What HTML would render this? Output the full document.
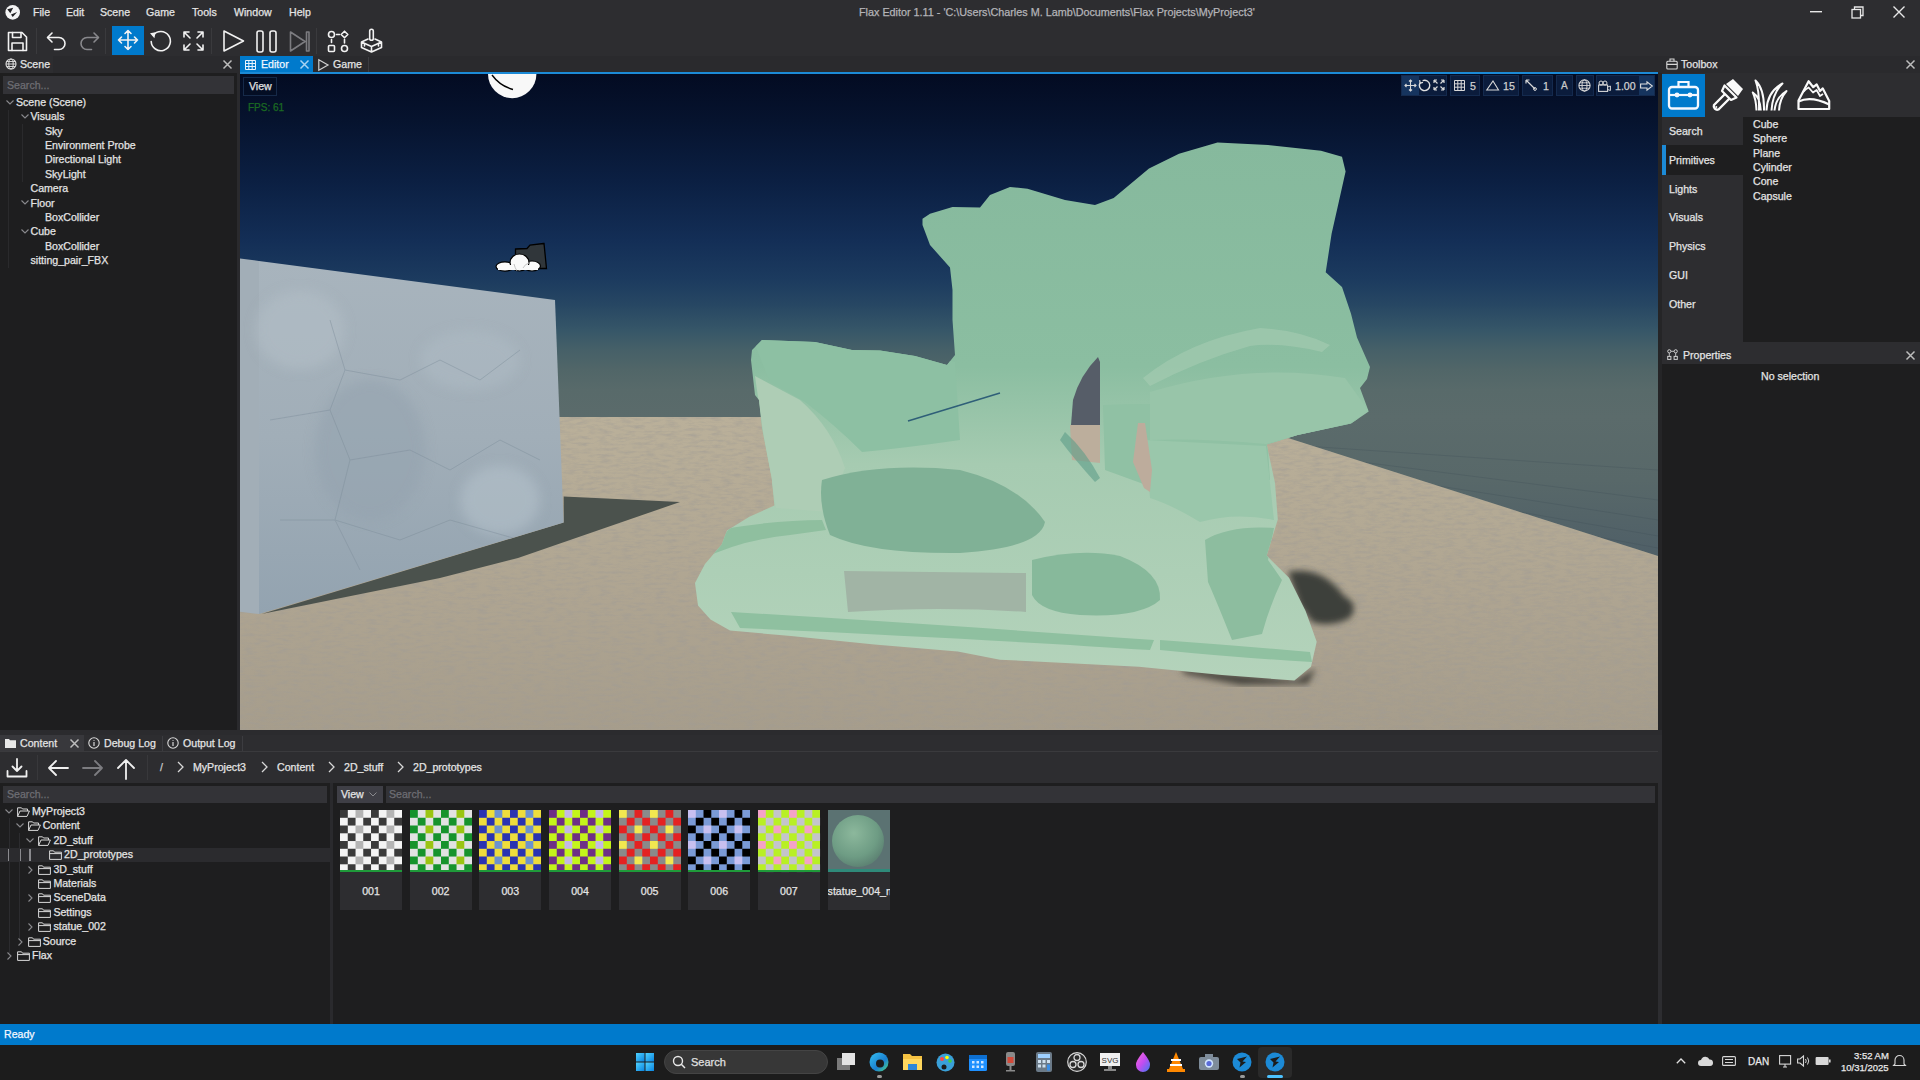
<!DOCTYPE html>
<html><head><meta charset="utf-8">
<style>
*{margin:0;padding:0;box-sizing:border-box}
html,body{width:1920px;height:1080px;overflow:hidden;background:#1c1c1c;font-family:"Liberation Sans",sans-serif;font-size:10.6px;color:#e4e4e4}
.a{position:absolute}
.t{position:absolute;white-space:nowrap;line-height:12px;-webkit-text-stroke:0.25px currentColor}
svg{position:absolute;overflow:visible}
.ic{fill:none;stroke:#f2f2f2;stroke-width:1.6;stroke-linecap:round;stroke-linejoin:round}
</style></head><body>

<!-- ===== top bar ===== -->
<div class="a" style="left:0;top:0;width:1920px;height:56px;background:#2d2d30"></div>
<div class="a" style="left:0;top:56px;width:1920px;height:17px;background:#2a2a2d"></div>
<svg style="left:4px;top:4px" width="18" height="18" viewBox="0 0 18 18"><circle cx="8.7" cy="8.4" r="7.3" fill="#f4f4f4"/><path d="M3.3 5.3 L9.2 3.7 L6.3 9.2 Z M7 10.6 L13.2 7.9 L8.7 12.9 Z" fill="#222225"/></svg>
<div class="t" style="left:33px;top:6px">File</div>
<div class="t" style="left:66px;top:6px">Edit</div>
<div class="t" style="left:100px;top:6px">Scene</div>
<div class="t" style="left:146px;top:6px">Game</div>
<div class="t" style="left:192px;top:6px">Tools</div>
<div class="t" style="left:234px;top:6px">Window</div>
<div class="t" style="left:289px;top:6px">Help</div>
<div class="t" style="left:859px;top:6px;color:#b4b4b8;font-size:10.8px">Flax Editor 1.11 - 'C:\Users\Charles M. Lamb\Documents\Flax Projects\MyProject3'</div>
<!-- window controls -->
<svg style="left:1810px;top:11px" width="12" height="2"><rect width="12" height="1.4" fill="#e8e8e8"/></svg>
<svg style="left:1851px;top:6px" width="13" height="13" viewBox="0 0 13 13"><rect x="1" y="3.5" width="8.5" height="8.5" fill="none" stroke="#e8e8e8" stroke-width="1.3"/><path d="M3.5 3.5 V1 H12 V9.5 H9.5" fill="none" stroke="#e8e8e8" stroke-width="1.3"/></svg>
<svg style="left:1893px;top:6px" width="12" height="12" viewBox="0 0 12 12"><path d="M0.5 0.5 L11.5 11.5 M11.5 0.5 L0.5 11.5" stroke="#e8e8e8" stroke-width="1.4"/></svg>
<!-- toolbar -->
<svg style="left:7px;top:31px" width="21" height="21" viewBox="0 0 21 21"><path class="ic" d="M1.5 1.5 H15 L19.5 6 V19.5 H1.5 Z" stroke-width="1.8"/><path class="ic" d="M5.5 1.5 V6.5 H14 V1.5" stroke-width="1.8"/><path class="ic" d="M5 19.5 V12 H16 V19.5" stroke-width="1.8"/></svg>
<div class="a" style="left:36px;top:28px;width:1px;height:26px;background:#3a3a3d"></div>
<svg style="left:46px;top:30px" width="22" height="22" viewBox="0 0 22 22"><path class="ic" d="M6 3 L1.5 7.5 L6 12" stroke-width="1.8"/><path class="ic" d="M1.8 7.5 H13 A6 6 0 0 1 13 19.5 H8.5" stroke-width="1.8"/></svg>
<svg style="left:78px;top:30px" width="22" height="22" viewBox="0 0 22 22"><path class="ic" d="M16 3 L20.5 7.5 L16 12" style="stroke:#88888c" stroke-width="1.8"/><path class="ic" d="M20.2 7.5 H9 A6 6 0 0 0 9 19.5 H13.5" style="stroke:#88888c" stroke-width="1.8"/></svg>
<div class="a" style="left:105px;top:28px;width:1px;height:26px;background:#3a3a3d"></div>
<div class="a" style="left:112px;top:26px;width:32px;height:29px;background:#007acc"></div>
<svg style="left:116px;top:28px" width="24" height="24" viewBox="0 0 24 24"><path class="ic" d="M12 2.5 V21.5 M2.5 12 H21.5 M9 5.5 L12 2.5 L15 5.5 M9 18.5 L12 21.5 L15 18.5 M5.5 9 L2.5 12 L5.5 15 M18.5 9 L21.5 12 L18.5 15" stroke-width="1.6"/></svg>
<svg style="left:148px;top:29px" width="25" height="25" viewBox="0 0 25 25"><path class="ic" d="M5.2 6.2 A9.6 9.6 0 1 1 3.2 12.5" stroke-width="2"/><path d="M2 4.2 L7.6 3.2 L6.4 9.2 Z" fill="#f2f2f2"/></svg>
<svg style="left:182px;top:30px" width="23" height="22" viewBox="0 0 23 22"><path class="ic" d="M2 2 L8 8 M2 2 H7 M2 2 V7 M21 2 L15 8 M21 2 H16 M21 2 V7 M2 20 L8 14 M2 20 H7 M2 20 V15 M21 20 L15 14 M21 20 H16 M21 20 V15" stroke-width="1.8"/></svg>
<div class="a" style="left:211px;top:28px;width:1px;height:26px;background:#3a3a3d"></div>
<svg style="left:222px;top:29px" width="23" height="24" viewBox="0 0 23 24"><path class="ic" d="M2 2 L21.5 12 L2 22 Z" stroke-width="1.8"/></svg>
<svg style="left:256px;top:30px" width="22" height="23" viewBox="0 0 22 23"><rect class="ic" x="1" y="1" width="6" height="21" rx="2" stroke-width="1.8"/><rect class="ic" x="14" y="1" width="6" height="21" rx="2" stroke-width="1.8"/></svg>
<svg style="left:289px;top:30px" width="22" height="23" viewBox="0 0 22 23"><path class="ic" d="M1.5 2 L16 11.5 L1.5 21 Z M17.5 2 H20 V21 H17.5 Z" style="stroke:#7c7c80" stroke-width="1.8"/></svg>
<div class="a" style="left:316px;top:28px;width:1px;height:26px;background:#3a3a3d"></div>
<svg style="left:327px;top:30px" width="23" height="23" viewBox="0 0 23 23"><circle class="ic" cx="4.5" cy="4.5" r="3" stroke-width="1.8"/><path class="ic" d="M17.5 1.2 L20.8 4.5 L17.5 7.8 L14.2 4.5 Z" stroke-width="1.8"/><rect class="ic" x="1.5" y="15.5" width="6" height="6" rx="1" stroke-width="1.8"/><circle class="ic" cx="17.5" cy="18.5" r="3" stroke-width="1.8"/><path class="ic" d="M9.5 4.5 H12.5 M4.5 9.5 V12.5 M17.5 9.5 V13" stroke-width="1.6"/></svg>
<svg style="left:360px;top:28px" width="23" height="25" viewBox="0 0 23 25"><path class="ic" d="M11.5 1.2 A1.8 1.8 0 0 1 13.3 3 V10.5 A1.8 1.8 0 0 1 9.7 10.5 V3 A1.8 1.8 0 0 1 11.5 1.2 Z" stroke-width="1.5"/><path class="ic" d="M8 11 L1.5 14 L11.5 18.5 L21.5 14 L15 11 M1.5 14 V19.5 L11.5 24 L21.5 19.5 V14 M11.5 18.5 V24" stroke-width="1.7"/><path class="ic" d="M4.5 16.5 L4.5 18 M18.5 16.5 L18.5 18" stroke-width="1.4"/></svg>
<!-- ===== scene panel ===== -->
<div class="a" style="left:0;top:56px;width:53px;height:17px;background:#2d2d30"></div>
<svg style="left:5px;top:58px" width="12" height="12" viewBox="0 0 12 12"><circle cx="6" cy="6" r="5" fill="none" stroke="#e0e0e0" stroke-width="1.1"/><ellipse cx="6" cy="6" rx="2.2" ry="5" fill="none" stroke="#e0e0e0" stroke-width="1"/><path d="M1 6 H11 M1.8 3.5 H10.2 M1.8 8.5 H10.2" stroke="#e0e0e0" stroke-width="0.9"/></svg>
<div class="t" style="left:20px;top:58px">Scene</div>
<svg style="left:223px;top:60px" width="9" height="9" viewBox="0 0 9 9"><path d="M0.5 0.5 L8.5 8.5 M8.5 0.5 L0.5 8.5" stroke="#bdbdbd" stroke-width="1.5"/></svg>
<div class="a" style="left:0;top:73px;width:238px;height:657px;background:#1e1e1f"></div>
<div class="a" style="left:3px;top:76px;width:231px;height:18px;background:#333337"></div>
<div class="t" style="left:7px;top:79px;color:#6e6e74">Search...</div>

<!-- scene tree -->
<div class="t" style="left:16.0px;top:96.0px">Scene (Scene)</div>
<svg style="left:6.0px;top:99.5px" width="8" height="5" viewBox="0 0 8 5"><path d="M0.5 0.5 L4 4 L7.5 0.5" fill="none" stroke="#8a8a8e" stroke-width="1.1"/></svg>
<div class="t" style="left:30.5px;top:110.4px">Visuals</div>
<svg style="left:20.5px;top:113.9px" width="8" height="5" viewBox="0 0 8 5"><path d="M0.5 0.5 L4 4 L7.5 0.5" fill="none" stroke="#8a8a8e" stroke-width="1.1"/></svg>
<div class="t" style="left:45.0px;top:124.7px">Sky</div>
<div class="t" style="left:45.0px;top:139.1px">Environment Probe</div>
<div class="t" style="left:45.0px;top:153.4px">Directional Light</div>
<div class="t" style="left:45.0px;top:167.8px">SkyLight</div>
<div class="t" style="left:30.5px;top:182.2px">Camera</div>
<div class="t" style="left:30.5px;top:196.5px">Floor</div>
<svg style="left:20.5px;top:200.0px" width="8" height="5" viewBox="0 0 8 5"><path d="M0.5 0.5 L4 4 L7.5 0.5" fill="none" stroke="#8a8a8e" stroke-width="1.1"/></svg>
<div class="t" style="left:45.0px;top:210.9px">BoxCollider</div>
<div class="t" style="left:30.5px;top:225.2px">Cube</div>
<svg style="left:20.5px;top:228.7px" width="8" height="5" viewBox="0 0 8 5"><path d="M0.5 0.5 L4 4 L7.5 0.5" fill="none" stroke="#8a8a8e" stroke-width="1.1"/></svg>
<div class="t" style="left:45.0px;top:239.6px">BoxCollider</div>
<div class="t" style="left:30.5px;top:254.0px">sitting_pair_FBX</div>
<div class="a" style="left:8px;top:110px;width:1px;height:158px;background:#2a2a2c"></div>
<div class="a" style="left:22px;top:124px;width:1px;height:58px;background:#2a2a2c"></div>

<!-- ===== viewport tabs ===== -->
<div class="a" style="left:240px;top:56px;width:73px;height:16px;background:#007acc"></div>
<svg style="left:245px;top:60px" width="11" height="10" viewBox="0 0 11 10"><path d="M0.5 0.5 H10.5 V9.5 H0.5 Z M3.8 0.5 V9.5 M7.2 0.5 V9.5 M0.5 3.5 H10.5 M0.5 6.5 H10.5" fill="none" stroke="#e8f4ff" stroke-width="1"/></svg>
<div class="t" style="left:261px;top:58px;color:#f0f8ff">Editor</div>
<svg style="left:300px;top:60px" width="9" height="9" viewBox="0 0 9 9"><path d="M0.5 0.5 L8.5 8.5 M8.5 0.5 L0.5 8.5" stroke="#a9d3f2" stroke-width="1.5"/></svg>
<svg style="left:318px;top:59px" width="11" height="12" viewBox="0 0 11 12"><path d="M0.8 0.8 L10 6 L0.8 11.2 Z" fill="none" stroke="#d0d0d0" stroke-width="1.2"/></svg>
<div class="t" style="left:333px;top:58px">Game</div>
<div class="a" style="left:368px;top:57px;width:1px;height:15px;background:#3c3c40"></div>
<div class="a" style="left:240px;top:72px;width:1418px;height:2px;background:#1c8ad6"></div>
<div class="a" style="left:237px;top:73px;width:3px;height:657px;background:#2a2a2d"></div>
<div class="a" style="left:1658px;top:73px;width:4px;height:657px;background:#252527"></div>
<div class="a" style="left:1658px;top:730px;width:4px;height:294px;background:#2d2d30"></div>
<!-- ===== 3D viewport ===== -->
<svg style="left:240px;top:74px" width="1418" height="656" viewBox="240 74 1418 656">
<defs>
 <linearGradient id="sky" x1="0" y1="74" x2="0" y2="560" gradientUnits="userSpaceOnUse">
  <stop offset="0.0000" stop-color="#030b22"/>
  <stop offset="0.0947" stop-color="#06132e"/>
  <stop offset="0.2181" stop-color="#0b1f42"/>
  <stop offset="0.3416" stop-color="#132e56"/>
  <stop offset="0.4239" stop-color="#1c3b5f"/>
  <stop offset="0.4753" stop-color="#274763"/>
  <stop offset="0.5267" stop-color="#365668"/>
  <stop offset="0.5679" stop-color="#466068"/>
  <stop offset="0.6091" stop-color="#516668"/>
  <stop offset="0.6502" stop-color="#586a6a"/>
  <stop offset="0.7058" stop-color="#5b6b6b"/>
  <stop offset="1.0000" stop-color="#56666a"/>
 </linearGradient>
 <linearGradient id="sand" x1="0" y1="417" x2="0" y2="730" gradientUnits="userSpaceOnUse">
  <stop offset="0" stop-color="#bab09a"/>
  <stop offset="0.3" stop-color="#b4aa95"/>
  <stop offset="0.6" stop-color="#aea491"/>
  <stop offset="1" stop-color="#a69d8c"/>
 </linearGradient>
 <linearGradient id="wall" x1="0" y1="260" x2="0" y2="614" gradientUnits="userSpaceOnUse">
  <stop offset="0" stop-color="#a8b4bd"/>
  <stop offset="0.5" stop-color="#a1aeb8"/>
  <stop offset="1" stop-color="#93a3b0"/>
 </linearGradient>
 <filter id="blur6" x="-20%" y="-20%" width="140%" height="140%"><feGaussianBlur stdDeviation="6"/></filter>
 <clipPath id="wallclip"><polygon points="240,258.5 555,300 563.6,522.5 259,614 240,611.7"/></clipPath>
 <linearGradient id="stat" x1="0" y1="140" x2="0" y2="680" gradientUnits="userSpaceOnUse">
  <stop offset="0" stop-color="#86b99d"/>
  <stop offset="0.42" stop-color="#8bbea1"/>
  <stop offset="0.6" stop-color="#a6cbb1"/>
  <stop offset="1" stop-color="#b4d3bb"/>
 </linearGradient>
 <clipPath id="stclip"><path d="M752,350 L762,340 L815,342 L852,350 L880,350.5 L915,356 L947,365 L955,355 L952.5,320 L952.5,290 L950,267.5 L930,245 L922.5,225 L922.5,218.75 L930,213.75 L952.5,207 L980,207.5 L990,195 L1010,187 L1027.5,188.75 L1065,200 L1095,205 L1113.7,198 L1149,168.5 L1179,153.7 L1217.5,142.5 L1268,145 L1321,150.75 L1342,156.7 L1345.6,171.5 L1339,201 L1331.6,233.8 L1325.7,272.3 L1342,287 L1351,313.8 L1357,337.5 L1370,367 L1367,379 L1360,388 L1368.7,411.6 L1351,423.5 L1297.5,435 L1266.7,444.4 L1275,483 L1277.8,519.4 L1266.7,555.6 L1289,577.8 L1305.6,611 L1316.7,641.7 L1311,666.7 L1294.4,680.5 L1222,675 L1139,666.7 L1000,659.7 L957.8,651.4 L874.4,644.4 L791,636 L730,630.5 L710.5,619.4 L698,605.5 L695,583 L705,564 L721.7,544.4 L727,530.5 L749.4,516.7 L774.4,505.5 L771.7,477.8 L762,428 L759,400 L755,395 L751,360 Z"/></clipPath>
 <linearGradient id="plane" x1="0" y1="417" x2="0" y2="556" gradientUnits="userSpaceOnUse"><stop offset="0" stop-color="#5b6b6b"/><stop offset="0.45" stop-color="#586869"/><stop offset="1" stop-color="#4f5f67"/></linearGradient>
 <filter id="noise" x="0" y="0" width="100%" height="100%"><feTurbulence type="fractalNoise" baseFrequency="0.09 0.35" numOctaves="3" seed="7" result="n"/><feColorMatrix in="n" type="matrix" values="0 0 0 0 0.35  0 0 0 0 0.33  0 0 0 0 0.3  0 0 0 -2.2 1.25"/></filter>
 <filter id="blur3"><feGaussianBlur stdDeviation="3"/></filter>
 <clipPath id="sandclip"><polygon points="240,417 1140,417 1288,438 1658,556 1658,730 240,730"/></clipPath>
</defs>
<rect x="240" y="74" width="1418" height="656" fill="url(#sky)"/>
<!-- far grid plane right -->
<polygon points="1000,417 1658,417 1658,556 1288,438" fill="url(#plane)"/>
<g stroke="#3e4c55" stroke-width="0.8" opacity="0.35" fill="none">
 <path d="M1290,445 L1658,470"/><path d="M1330,458 L1658,500"/><path d="M1400,480 L1658,520"/><path d="M1480,505 L1658,536"/><path d="M1560,530 L1658,548"/>
</g>
<!-- sand -->
<polygon points="240,417 1140,417 1288,438 1658,556 1658,730 240,730" fill="url(#sand)"/>
<rect x="240" y="417" width="1418" height="313" filter="url(#noise)" opacity="0.55" clip-path="url(#sandclip)"/>
<!-- wall shadow -->
<polygon points="563.7,496.4 680,502 518,558 440,578 261.6,614 563.7,522.6" fill="#4b524d"/>
<!-- wall -->
<polygon points="240,258.5 259,261 259,614 240,611.7" fill="#a2aeb7"/>
<polygon points="259,261 555,300 563.6,522.5 259,614" fill="url(#wall)"/>
<g clip-path="url(#wallclip)" filter="url(#blur6)" opacity="0.6">
 <ellipse cx="370" cy="450" rx="55" ry="70" fill="#94a3af"/>
 <ellipse cx="500" cy="500" rx="40" ry="35" fill="#b4c1ca"/>
 <ellipse cx="300" cy="330" rx="45" ry="40" fill="#b2bec6"/>
 <ellipse cx="470" cy="360" rx="50" ry="30" fill="#adbac3"/>
</g>
<g clip-path="url(#wallclip)" fill="none" stroke="#7e8e9b" stroke-width="1" opacity="0.45">
 <path d="M330,320 L345,370 L330,410 L350,460 L335,520 L360,570"/>
 <path d="M345,370 L400,380 L440,360 L480,380 L520,350"/>
 <path d="M350,460 L410,450 L450,470 L500,440 L540,460"/>
 <path d="M270,420 L330,410 M280,520 L335,520 L400,540 L450,520 L520,540"/>
</g>
<!-- statue shadow -->
<path d="M1288,572 Q1305,568 1322,576 Q1336,584 1344,596 Q1360,604 1350,618 Q1330,628 1312,622 L1300,606 Z" fill="#3d3f3a" filter="url(#blur3)"/>
<path d="M1180,668 L1296,680 L1316,668 L1308,684 L1240,685 L1185,674 Z" fill="#4a4740" filter="url(#blur3)"/>
<!-- statue -->
<path id="stp" fill="url(#stat)" d="M752,350 L762,340 L815,342 L852,350 L880,350.5 L915,356 L947,365 L955,355 L952.5,320 L952.5,290 L950,267.5 L930,245 L922.5,225 L922.5,218.75 L930,213.75 L952.5,207 L980,207.5 L990,195 L1010,187 L1027.5,188.75 L1065,200 L1095,205 L1113.7,198 L1149,168.5 L1179,153.7 L1217.5,142.5 L1268,145 L1321,150.75 L1342,156.7 L1345.6,171.5 L1339,201 L1331.6,233.8 L1325.7,272.3 L1342,287 L1351,313.8 L1357,337.5 L1370,367 L1367,379 L1360,388 L1368.7,411.6 L1351,423.5 L1297.5,435 L1266.7,444.4 L1275,483 L1277.8,519.4 L1266.7,555.6 L1289,577.8 L1305.6,611 L1316.7,641.7 L1311,666.7 L1294.4,680.5 L1222,675 L1139,666.7 L1000,659.7 L957.8,651.4 L874.4,644.4 L791,636 L730,630.5 L710.5,619.4 L698,605.5 L695,583 L705,564 L721.7,544.4 L727,530.5 L749.4,516.7 L774.4,505.5 L771.7,477.8 L762,428 L759,400 L755,395 L751,360 Z"/>
<g clip-path="url(#stclip)">
 <path d="M753,340 Q850,338 955,362 L960,440 Q905,448 862,452 Q835,425 805,402 L770,382 Z" fill="#8dc0a3"/>
 <path d="M755,376 L800,400 Q832,428 845,468 L828,512 L776,508 L763,432 Z" fill="#aecdb5"/>
 <path d="M1103,405 Q1200,400 1370,420 L1300,440 L1268,450 L1270,480 Q1200,470 1160,490 L1105,470 Z" fill="#90c1a4"/>
 <path d="M700,560 Q740,540 790,535 L826,530 L822,520 Q780,520 730,528 Z" fill="#8fbf9f"/>
 <path d="M822,480 Q880,462 960,470 Q1020,485 1045,522 Q1040,548 960,553 Q870,554 830,535 Q818,505 822,480 Z" fill="#80b196"/>
 <path d="M844,571 L1026,573 L1026,612 Q940,606 848,612 Z" fill="#a1b4a5"/>
 <path d="M1032,560 Q1080,548 1120,556 Q1162,572 1160,600 Q1140,618 1080,615 Q1040,612 1032,595 Z" fill="#87b99b"/>
 <path d="M1205,540 Q1230,525 1274,528 L1268,560 L1282,580 Q1270,605 1262,634 L1232,640 Q1216,600 1208,582 Z" fill="#8dbd9f"/>
 <path d="M1145,440 L1266,446 L1274,520 Q1235,512 1200,522 Q1172,505 1150,498 Z" fill="#9ac7ab"/>
 <path d="M731,612 Q900,622 1154,640 L1150,650 Q1000,640 740,628 Z" fill="#8fc0a0"/>
 <path d="M1160,640 Q1230,645 1310,652 L1312,662 Q1240,658 1160,650 Z" fill="#90c1a1"/>
 
 <path d="M908,421 L1000,393" fill="none" stroke="#2f5f78" stroke-width="1.6"/>
 <path d="M1150,392 Q1250,362 1345,378 L1368,410 L1351,423 L1300,435 L1266,444 Q1200,438 1150,440 Z" fill="#98c5a9"/>
 <path d="M1143,378 Q1190,340 1260,328 Q1300,330 1330,345 L1322,352 Q1280,342 1250,346 Q1200,360 1150,386 Z" fill="#b0d0b7" opacity="0.45"/>
</g>
<!-- holes -->
<path d="M1098,357 Q1080,375 1073,400 L1071,425 L1100,425 L1100,362 Z" fill="#565d68"/>
<polygon points="1070,425 1100,425 1100,463 1072,460" fill="#bcae9c"/>
<path d="M1065,432 Q1085,450 1100,478 L1095,482 Q1075,460 1060,440 Z" fill="#5e9c88" opacity="0.6"/>
<polygon points="1138,423 1145,423 1152,470 1150,492 1144,488 1133,462" fill="#bdac9c"/>
<!-- gizmos -->
<path d="M488,74 A24,24 0 0 0 536.4,74 Z" fill="#f8f8f8"/>
<path d="M492,75 Q500,86 513,89.5" fill="none" stroke="#000" stroke-width="1.4"/>
<path d="M515.5,249 L527,248.5 L530,245 L543.5,243.5 L544,243.5 L546.5,268.5 L515.5,268.5 Z" fill="#30363a" stroke="#000" stroke-width="1.3"/>
<g stroke="#000" stroke-width="1.2"><ellipse cx="505" cy="266.5" rx="9" ry="4.6" fill="#fafafa"/><ellipse cx="532" cy="266" rx="8.5" ry="5" fill="#fafafa"/><ellipse cx="519.5" cy="262.5" rx="9.5" ry="8.5" fill="#fafafa"/></g>
<g fill="#fafafa"><rect x="498" y="265" width="40" height="5"/></g>
<path d="M514,264 Q515,268 517,271 M523,268 Q525,264 529,263" fill="none" stroke="#b8b8b8" stroke-width="0.8"/>
</svg>
<!-- viewport overlays -->
<div class="a" style="left:243px;top:77px;width:34px;height:19px;background:rgba(4,14,36,0.7);border:1px solid rgba(40,70,110,0.5)"></div>
<div class="t" style="left:249px;top:80px;color:#e0e0e0">View</div>
<div class="t" style="left:248px;top:102px;color:#1b6a22;font-size:10px">FPS: 61</div>

<!-- ===== viewport toolbar (right) ===== -->
<div class="a" style="left:1401px;top:75px;width:46px;height:21px;background:#0b1c3c;border:1px solid #142a4e"></div>
<div class="a" style="left:1450px;top:75px;width:30px;height:21px;background:#0b1c3c;border:1px solid #142a4e"></div>
<div class="a" style="left:1483px;top:75px;width:36px;height:21px;background:#0b1c3c;border:1px solid #142a4e"></div>
<div class="a" style="left:1522px;top:75px;width:31px;height:21px;background:#0b1c3c;border:1px solid #142a4e"></div>
<div class="a" style="left:1556px;top:75px;width:17px;height:21px;background:#0b1c3c;border:1px solid #142a4e"></div>
<div class="a" style="left:1576px;top:75px;width:18px;height:21px;background:#0b1c3c;border:1px solid #142a4e"></div>
<div class="a" style="left:1596px;top:75px;width:59px;height:21px;background:#0b1c3c;border:1px solid #142a4e"></div>
<div class="a" style="left:1402px;top:76px;width:17px;height:19px;background:#16345e"></div>
<div class="a" style="left:1639px;top:76px;width:15px;height:19px;background:#16345e"></div>
<svg style="left:1404px;top:79px" width="13" height="13" viewBox="0 0 13 13"><path d="M6.5 1 V12 M1 6.5 H12 M5 2.5 L6.5 1 L8 2.5 M5 10.5 L6.5 12 L8 10.5 M2.5 5 L1 6.5 L2.5 8 M10.5 5 L12 6.5 L10.5 8" fill="none" stroke="#d8d8d8" stroke-width="1.1"/></svg>
<svg style="left:1418px;top:79px" width="13" height="13" viewBox="0 0 13 13"><path d="M2.2 3.6 A5.2 5.2 0 1 0 4.6 1.6" fill="none" stroke="#e0e0e0" stroke-width="1.4"/><path d="M1.6 1.2 L2.2 4.2 L5 3.4" fill="none" stroke="#e0e0e0" stroke-width="1.2"/></svg>
<svg style="left:1433px;top:79px" width="12" height="12" viewBox="0 0 12 12"><path d="M1 1 L4.5 4.5 M1 1 H4 M1 1 V4 M11 1 L7.5 4.5 M11 1 H8 M11 1 V4 M1 11 L4.5 7.5 M1 11 H4 M1 11 V8 M11 11 L7.5 7.5 M11 11 H8 M11 11 V8" fill="none" stroke="#d8d8d8" stroke-width="1.2"/></svg>
<svg style="left:1454px;top:80px" width="11" height="11" viewBox="0 0 11 11"><path d="M0.5 0.5 H10.5 V10.5 H0.5 Z M3.8 0.5 V10.5 M7.2 0.5 V10.5 M0.5 3.8 H10.5 M0.5 7.2 H10.5" fill="none" stroke="#d8d8d8" stroke-width="1"/></svg>
<div class="t" style="left:1470px;top:80px;color:#d0d0d0">5</div>
<svg style="left:1486px;top:80px" width="13" height="11" viewBox="0 0 13 11"><path d="M7 1 L12.5 10 H0.8 Z" fill="none" stroke="#d8d8d8" stroke-width="1.1"/></svg>
<div class="t" style="left:1503px;top:80px;color:#d0d0d0">15</div>
<svg style="left:1525px;top:79px" width="12" height="12" viewBox="0 0 12 12"><path d="M1 1 L10 10 M1 1 V4.5 M1 1 H4.5" fill="none" stroke="#d8d8d8" stroke-width="1.2"/><circle cx="10" cy="10" r="1.4" fill="none" stroke="#d8d8d8"/></svg>
<div class="t" style="left:1543px;top:80px;color:#d0d0d0">1</div>
<div class="t" style="left:1561px;top:80px;color:#c8c8c8;font-size:10px">A</div>
<svg style="left:1578px;top:79px" width="13" height="13" viewBox="0 0 13 13"><circle cx="6.5" cy="6.5" r="5.6" fill="none" stroke="#d8d8d8" stroke-width="1.1"/><ellipse cx="6.5" cy="6.5" rx="2.5" ry="5.6" fill="none" stroke="#d8d8d8" stroke-width="1"/><path d="M1 6.5 H12 M1.8 3.8 H11.2 M1.8 9.2 H11.2" stroke="#d8d8d8" stroke-width="0.9"/></svg>
<svg style="left:1598px;top:80px" width="13" height="12" viewBox="0 0 13 12"><rect x="0.6" y="5" width="9" height="6.4" fill="none" stroke="#d8d8d8" stroke-width="1.1"/><circle cx="3" cy="3" r="2" fill="none" stroke="#d8d8d8"/><circle cx="7" cy="3" r="2" fill="none" stroke="#d8d8d8"/><path d="M9.6 7 L12.4 6 V10.5 L9.6 9.5" fill="none" stroke="#d8d8d8"/></svg>
<div class="t" style="left:1615px;top:80px;color:#d0d0d0">1.00</div>
<svg style="left:1640px;top:81px" width="13" height="10" viewBox="0 0 13 10"><path d="M0.6 3 H7 V0.8 L12.3 5 L7 9.2 V7 H0.6 Z" fill="none" stroke="#e0e0e0" stroke-width="1.1"/></svg>

<!-- ===== toolbox ===== -->
<div class="a" style="left:1662px;top:56px;width:258px;height:17px;background:#2a2a2d"></div>
<svg style="left:1666px;top:58px" width="12" height="12" viewBox="0 0 12 12"><rect x="0.8" y="3.2" width="10.4" height="7.8" rx="1" fill="none" stroke="#d8d8d8" stroke-width="1.1"/><path d="M4 3.2 V1 H8 V3.2 M0.8 6.4 H11.2" fill="none" stroke="#d8d8d8" stroke-width="1.1"/></svg>
<div class="t" style="left:1681px;top:58px">Toolbox</div>
<svg style="left:1906px;top:60px" width="9" height="9" viewBox="0 0 9 9"><path d="M0.5 0.5 L8.5 8.5 M8.5 0.5 L0.5 8.5" stroke="#bdbdbd" stroke-width="1.5"/></svg>
<div class="a" style="left:1662px;top:73px;width:258px;height:270px;background:#2d2d30"></div>
<div class="a" style="left:1662px;top:74px;width:43px;height:43px;background:#007acc"></div>
<svg style="left:1667px;top:80px" width="33" height="31" viewBox="0 0 33 31"><path d="M11.5 7 V2 H21.5 V7" fill="none" stroke="#f4f8ff" stroke-width="2.2"/><rect x="2" y="7" width="29" height="21.5" rx="3" fill="none" stroke="#f4f8ff" stroke-width="2.3"/><path d="M2 15 H31" stroke="#f4f8ff" stroke-width="2.2"/><circle cx="10" cy="15" r="2.4" fill="#f4f8ff"/><circle cx="23" cy="15" r="2.4" fill="#f4f8ff"/></svg>
<svg style="left:1709px;top:78px" width="35" height="35" viewBox="0 0 35 35"><path d="M17 6 L24 1 L34 11 L29 18 Z" fill="#fafafa"/><path d="M15.5 7.5 L27.5 19.5 L22 22 L13 13 Z" fill="none" stroke="#fafafa" stroke-width="2.2" stroke-linejoin="round"/><path d="M16 16 L5 27 A3.5 3.5 0 0 0 9.5 31.5 L20.5 20.5" fill="none" stroke="#fafafa" stroke-width="2.4" stroke-linejoin="round"/><circle cx="7.3" cy="29" r="1" fill="#fafafa"/></svg>
<svg style="left:1752px;top:79px" width="36" height="33" viewBox="0 0 36 33"><path d="M7 31.5 Q7.5 12 3.5 1.5 Q12.5 10 12 31.5 M4.5 31.5 Q4 20 0.8 13.5 Q8 18 8.8 31.5 M14.5 31.5 Q15 13 30.5 4.5 Q20.5 14 19.5 31.5 M22.5 31.5 Q24 18 34.5 12 Q27.5 20 27 31.5" fill="none" stroke="#fafafa" stroke-width="2" stroke-linejoin="round"/></svg>
<svg style="left:1797px;top:80px" width="34" height="31" viewBox="0 0 34 31"><path d="M1.5 29 V20.5 L11.6 1.2 L16.3 7.2 L19.7 4.4 L23 11 L25.8 8.4 L32.2 21 V29 Z" fill="none" stroke="#fafafa" stroke-width="2.2" stroke-linejoin="round"/><path d="M1.5 21.5 Q14 15.5 32.2 24.5" fill="none" stroke="#fafafa" stroke-width="2.2"/><path d="M6 12 Q9 9 11.6 7.5 L16 12.5 L19.6 10 L23 16 L26 14" fill="none" stroke="#fafafa" stroke-width="1.8" stroke-linejoin="round"/></svg>
<div class="a" style="left:1743px;top:117px;width:177px;height:225px;background:#1e1e1f"></div>
<div class="a" style="left:1662px;top:145px;width:81px;height:30px;background:#1e1e1f"></div>
<div class="a" style="left:1662px;top:145px;width:4px;height:30px;background:#1c8ad6"></div>
<div class="t" style="left:1669px;top:125px">Search</div>
<div class="t" style="left:1669px;top:154px">Primitives</div>
<div class="t" style="left:1669px;top:183px">Lights</div>
<div class="t" style="left:1669px;top:211px">Visuals</div>
<div class="t" style="left:1669px;top:240px">Physics</div>
<div class="t" style="left:1669px;top:269px">GUI</div>
<div class="t" style="left:1669px;top:298px">Other</div>
<div class="t" style="left:1753px;top:118px">Cube</div>
<div class="t" style="left:1753px;top:132px">Sphere</div>
<div class="t" style="left:1753px;top:147px">Plane</div>
<div class="t" style="left:1753px;top:161px">Cylinder</div>
<div class="t" style="left:1753px;top:175px">Cone</div>
<div class="t" style="left:1753px;top:190px">Capsule</div>
<!-- ===== properties ===== -->
<div class="a" style="left:1662px;top:343px;width:258px;height:21px;background:#2d2d30"></div>
<svg style="left:1667px;top:349px" width="11" height="11" viewBox="0 0 11 11"><circle cx="2.3" cy="2.3" r="1.6" fill="none" stroke="#d0d0d0"/><circle cx="8.7" cy="2.3" r="1.6" fill="none" stroke="#d0d0d0"/><rect x="0.7" y="7.4" width="3.2" height="3" fill="none" stroke="#d0d0d0"/><rect x="7.1" y="7.4" width="3.2" height="3" fill="none" stroke="#d0d0d0"/><path d="M2.3 4 V7.4 M8.7 4 V7.4 M4 2.3 H7" stroke="#d0d0d0" stroke-width="0.9"/></svg>
<div class="t" style="left:1683px;top:349px">Properties</div>
<svg style="left:1906px;top:351px" width="9" height="9" viewBox="0 0 9 9"><path d="M0.5 0.5 L8.5 8.5 M8.5 0.5 L0.5 8.5" stroke="#bdbdbd" stroke-width="1.5"/></svg>
<div class="a" style="left:1662px;top:364px;width:258px;height:660px;background:#1e1e1f"></div>
<div class="t" style="left:1761px;top:370px">No selection</div>

<!-- ===== content panel ===== -->
<div class="a" style="left:0;top:730px;width:1662px;height:5px;background:#2b2b2e"></div>
<div class="a" style="left:0;top:735px;width:1658px;height:17px;background:#2d2d30"></div>
<div class="a" style="left:0;top:735px;width:84px;height:17px;background:#38383c"></div>
<svg style="left:5px;top:738px" width="11" height="10" viewBox="0 0 11 10"><path d="M0 1 H4 L5 2.3 H11 V10 H0 Z" fill="#e8e8e8"/></svg>
<div class="t" style="left:20px;top:737px">Content</div>
<svg style="left:70px;top:739px" width="9" height="9" viewBox="0 0 9 9"><path d="M0.5 0.5 L8.5 8.5 M8.5 0.5 L0.5 8.5" stroke="#bdbdbd" stroke-width="1.5"/></svg>
<svg style="left:88px;top:737px" width="12" height="12" viewBox="0 0 12 12"><circle cx="6" cy="6" r="5.2" fill="none" stroke="#d8d8d8" stroke-width="1.1"/><path d="M6 5 V9 M6 3 V3.8" stroke="#d8d8d8" stroke-width="1.2"/></svg>
<div class="t" style="left:104px;top:737px">Debug Log</div>
<div class="a" style="left:162px;top:736px;width:1px;height:15px;background:#3c3c40"></div>
<svg style="left:167px;top:737px" width="12" height="12" viewBox="0 0 12 12"><circle cx="6" cy="6" r="5.2" fill="none" stroke="#d8d8d8" stroke-width="1.1"/><path d="M6 5 V9 M6 3 V3.8" stroke="#d8d8d8" stroke-width="1.2"/></svg>
<div class="t" style="left:183px;top:737px">Output Log</div>
<div class="a" style="left:242px;top:736px;width:1px;height:15px;background:#3c3c40"></div>
<div class="a" style="left:0;top:752px;width:1658px;height:31px;background:#2d2d30"></div>
<div class="a" style="left:0;top:751px;width:1658px;height:1px;background:#3a3a3d"></div>
<svg style="left:6px;top:758px" width="22" height="20" viewBox="0 0 22 20"><path d="M11 1 V13 M6.5 8.5 L11 13 L15.5 8.5" fill="none" stroke="#f0f0f0" stroke-width="1.8" stroke-linecap="round" stroke-linejoin="round"/><path d="M1.5 13 V18.5 H20.5 V13" fill="none" stroke="#f0f0f0" stroke-width="1.8" stroke-linecap="round" stroke-linejoin="round"/></svg>
<div class="a" style="left:37px;top:755px;width:1px;height:25px;background:#38383b"></div>
<svg style="left:47px;top:759px" width="22" height="18" viewBox="0 0 22 18"><path d="M21 9 H2 M9 2 L2 9 L9 16" fill="none" stroke="#f0f0f0" stroke-width="1.8" stroke-linecap="round" stroke-linejoin="round"/></svg>
<svg style="left:82px;top:759px" width="22" height="18" viewBox="0 0 22 18"><path d="M1 9 H20 M13 2 L20 9 L13 16" fill="none" stroke="#7c7c80" stroke-width="1.8" stroke-linecap="round" stroke-linejoin="round"/></svg>
<svg style="left:116px;top:758px" width="20" height="22" viewBox="0 0 20 22"><path d="M10 21 V2 M2 10 L10 2 L18 10" fill="none" stroke="#f0f0f0" stroke-width="1.8" stroke-linecap="round" stroke-linejoin="round"/></svg>
<div class="a" style="left:147px;top:755px;width:1px;height:25px;background:#38383b"></div>
<div class="t" style="left:160px;top:761px;color:#c8c8c8">/</div>
<svg style="left:177px;top:761px" width="7" height="12" viewBox="0 0 7 12"><path d="M1 1 L6 6 L1 11" fill="none" stroke="#d8d8d8" stroke-width="1.3"/></svg>
<div class="t" style="left:193px;top:761px">MyProject3</div>
<svg style="left:261px;top:761px" width="7" height="12" viewBox="0 0 7 12"><path d="M1 1 L6 6 L1 11" fill="none" stroke="#d8d8d8" stroke-width="1.3"/></svg>
<div class="t" style="left:277px;top:761px">Content</div>
<svg style="left:328px;top:761px" width="7" height="12" viewBox="0 0 7 12"><path d="M1 1 L6 6 L1 11" fill="none" stroke="#d8d8d8" stroke-width="1.3"/></svg>
<div class="t" style="left:344px;top:761px">2D_stuff</div>
<svg style="left:397px;top:761px" width="7" height="12" viewBox="0 0 7 12"><path d="M1 1 L6 6 L1 11" fill="none" stroke="#d8d8d8" stroke-width="1.3"/></svg>
<div class="t" style="left:413px;top:761px">2D_prototypes</div>
<div class="a" style="left:0;top:783px;width:330px;height:241px;background:#1e1e1f"></div>
<div class="a" style="left:330px;top:783px;width:3px;height:241px;background:#2a2a2d"></div>
<div class="a" style="left:333px;top:783px;width:1325px;height:241px;background:#1e1e1f"></div>
<div class="a" style="left:3px;top:786px;width:324px;height:17px;background:#333337"></div>
<div class="t" style="left:7px;top:788px;color:#6e6e74">Search...</div>
<div class="a" style="left:0;top:848px;width:330px;height:14px;background:#2b2b2e"></div>
<svg style="left:17.0px;top:807.0px" width="13" height="10" viewBox="0 0 13 10"><path d="M0.6 9.4 V0.8 H4.5 L5.5 2 H10.5 V4 M0.6 9.4 L3 4 H12.4 L10 9.4 Z" fill="none" stroke="#d8d8d8" stroke-width="1"/></svg>
<svg style="left:5.0px;top:809.0px" width="8" height="5" viewBox="0 0 8 5"><path d="M0.5 0.5 L4 4 L7.5 0.5" fill="none" stroke="#8a8a8e" stroke-width="1.1"/></svg>
<div class="t" style="left:32.0px;top:805.0px">MyProject3</div>
<svg style="left:27.7px;top:821.4px" width="13" height="10" viewBox="0 0 13 10"><path d="M0.6 9.4 V0.8 H4.5 L5.5 2 H10.5 V4 M0.6 9.4 L3 4 H12.4 L10 9.4 Z" fill="none" stroke="#d8d8d8" stroke-width="1"/></svg>
<svg style="left:15.7px;top:823.4px" width="8" height="5" viewBox="0 0 8 5"><path d="M0.5 0.5 L4 4 L7.5 0.5" fill="none" stroke="#8a8a8e" stroke-width="1.1"/></svg>
<div class="t" style="left:42.7px;top:819.4px">Content</div>
<svg style="left:38.4px;top:835.8px" width="13" height="10" viewBox="0 0 13 10"><path d="M0.6 9.4 V0.8 H4.5 L5.5 2 H10.5 V4 M0.6 9.4 L3 4 H12.4 L10 9.4 Z" fill="none" stroke="#d8d8d8" stroke-width="1"/></svg>
<svg style="left:26.4px;top:837.8px" width="8" height="5" viewBox="0 0 8 5"><path d="M0.5 0.5 L4 4 L7.5 0.5" fill="none" stroke="#8a8a8e" stroke-width="1.1"/></svg>
<div class="t" style="left:53.4px;top:833.8px">2D_stuff</div>
<svg style="left:49.1px;top:850.2px" width="13" height="10" viewBox="0 0 13 10"><path d="M0.6 9.4 V0.8 H4.5 L5.5 2.2 H12.4 V9.4 Z M0.6 3.6 H12.4" fill="none" stroke="#d8d8d8" stroke-width="1"/></svg>
<div class="t" style="left:64.1px;top:848.2px">2D_prototypes</div>
<svg style="left:38.4px;top:864.6px" width="13" height="10" viewBox="0 0 13 10"><path d="M0.6 9.4 V0.8 H4.5 L5.5 2.2 H12.4 V9.4 Z M0.6 3.6 H12.4" fill="none" stroke="#d8d8d8" stroke-width="1"/></svg>
<svg style="left:28.4px;top:865.6px" width="5" height="8" viewBox="0 0 5 8"><path d="M0.5 0.5 L4 4 L0.5 7.5" fill="none" stroke="#8a8a8e" stroke-width="1.1"/></svg>
<div class="t" style="left:53.4px;top:862.6px">3D_stuff</div>
<svg style="left:38.4px;top:879.0px" width="13" height="10" viewBox="0 0 13 10"><path d="M0.6 9.4 V0.8 H4.5 L5.5 2.2 H12.4 V9.4 Z M0.6 3.6 H12.4" fill="none" stroke="#d8d8d8" stroke-width="1"/></svg>
<div class="t" style="left:53.4px;top:877.0px">Materials</div>
<svg style="left:38.4px;top:893.4px" width="13" height="10" viewBox="0 0 13 10"><path d="M0.6 9.4 V0.8 H4.5 L5.5 2.2 H12.4 V9.4 Z M0.6 3.6 H12.4" fill="none" stroke="#d8d8d8" stroke-width="1"/></svg>
<svg style="left:28.4px;top:894.4px" width="5" height="8" viewBox="0 0 5 8"><path d="M0.5 0.5 L4 4 L0.5 7.5" fill="none" stroke="#8a8a8e" stroke-width="1.1"/></svg>
<div class="t" style="left:53.4px;top:891.4px">SceneData</div>
<svg style="left:38.4px;top:907.8px" width="13" height="10" viewBox="0 0 13 10"><path d="M0.6 9.4 V0.8 H4.5 L5.5 2.2 H12.4 V9.4 Z M0.6 3.6 H12.4" fill="none" stroke="#d8d8d8" stroke-width="1"/></svg>
<div class="t" style="left:53.4px;top:905.8px">Settings</div>
<svg style="left:38.4px;top:922.2px" width="13" height="10" viewBox="0 0 13 10"><path d="M0.6 9.4 V0.8 H4.5 L5.5 2.2 H12.4 V9.4 Z M0.6 3.6 H12.4" fill="none" stroke="#d8d8d8" stroke-width="1"/></svg>
<svg style="left:28.4px;top:923.2px" width="5" height="8" viewBox="0 0 5 8"><path d="M0.5 0.5 L4 4 L0.5 7.5" fill="none" stroke="#8a8a8e" stroke-width="1.1"/></svg>
<div class="t" style="left:53.4px;top:920.2px">statue_002</div>
<svg style="left:27.7px;top:936.6px" width="13" height="10" viewBox="0 0 13 10"><path d="M0.6 9.4 V0.8 H4.5 L5.5 2.2 H12.4 V9.4 Z M0.6 3.6 H12.4" fill="none" stroke="#d8d8d8" stroke-width="1"/></svg>
<svg style="left:17.7px;top:937.6px" width="5" height="8" viewBox="0 0 5 8"><path d="M0.5 0.5 L4 4 L0.5 7.5" fill="none" stroke="#8a8a8e" stroke-width="1.1"/></svg>
<div class="t" style="left:42.7px;top:934.6px">Source</div>
<svg style="left:17.0px;top:951.0px" width="13" height="10" viewBox="0 0 13 10"><path d="M0.6 9.4 V0.8 H4.5 L5.5 2.2 H12.4 V9.4 Z M0.6 3.6 H12.4" fill="none" stroke="#d8d8d8" stroke-width="1"/></svg>
<svg style="left:7.0px;top:952.0px" width="5" height="8" viewBox="0 0 5 8"><path d="M0.5 0.5 L4 4 L0.5 7.5" fill="none" stroke="#8a8a8e" stroke-width="1.1"/></svg>
<div class="t" style="left:32.0px;top:949.0px">Flax</div>
<div class="a" style="left:8px;top:849px;width:2px;height:12px;background:#8a8a8e"></div>
<div class="a" style="left:19px;top:849px;width:2px;height:12px;background:#8a8a8e"></div>
<div class="a" style="left:29px;top:849px;width:2px;height:12px;background:#8a8a8e"></div>
<div class="a" style="left:8.5px;top:818px;width:1px;height:135px;background:#2c2c2f"></div>
<div class="a" style="left:19px;top:833px;width:1px;height:105px;background:#2c2c2f"></div>
<div class="a" style="left:337px;top:786px;width:46px;height:17px;background:#3f3f46"></div>
<div class="t" style="left:341px;top:788px">View</div>
<svg style="left:369px;top:792px" width="8" height="5" viewBox="0 0 8 5"><path d="M0.5 0.5 L4 4 L7.5 0.5" fill="none" stroke="#8a8a8e" stroke-width="1"/></svg>
<div class="a" style="left:386px;top:786px;width:1269px;height:17px;background:#333337"></div>
<div class="t" style="left:389px;top:788px;color:#6e6e74">Search...</div>
<div class="a" style="left:340.0px;top:810px;width:62px;height:100px;background:#2d2d30"></div>
<svg style="left:340.0px;top:810px" width="62" height="61" viewBox="0 0 62 61"><rect width="62" height="61" fill="#f4f4f4"/><rect x="0.00" y="0.00" width="7.80" height="7.80" fill="#3a3a3a"/><rect x="15.50" y="0.00" width="7.80" height="7.80" fill="#b4b4b4"/><rect x="31.00" y="0.00" width="7.80" height="7.80" fill="#3a3a3a"/><rect x="46.50" y="0.00" width="7.80" height="7.80" fill="#b4b4b4"/><rect x="7.75" y="7.75" width="7.80" height="7.80" fill="#3a3a3a"/><rect x="23.25" y="7.75" width="7.80" height="7.80" fill="#3a3a3a"/><rect x="38.75" y="7.75" width="7.80" height="7.80" fill="#3a3a3a"/><rect x="54.25" y="7.75" width="7.80" height="7.80" fill="#3a3a3a"/><rect x="0.00" y="15.50" width="7.80" height="7.80" fill="#3a3a3a"/><rect x="15.50" y="15.50" width="7.80" height="7.80" fill="#b4b4b4"/><rect x="31.00" y="15.50" width="7.80" height="7.80" fill="#3a3a3a"/><rect x="46.50" y="15.50" width="7.80" height="7.80" fill="#b4b4b4"/><rect x="7.75" y="23.25" width="7.80" height="7.80" fill="#3a3a3a"/><rect x="23.25" y="23.25" width="7.80" height="7.80" fill="#3a3a3a"/><rect x="38.75" y="23.25" width="7.80" height="7.80" fill="#3a3a3a"/><rect x="54.25" y="23.25" width="7.80" height="7.80" fill="#3a3a3a"/><rect x="0.00" y="31.00" width="7.80" height="7.80" fill="#3a3a3a"/><rect x="15.50" y="31.00" width="7.80" height="7.80" fill="#b4b4b4"/><rect x="31.00" y="31.00" width="7.80" height="7.80" fill="#3a3a3a"/><rect x="46.50" y="31.00" width="7.80" height="7.80" fill="#b4b4b4"/><rect x="7.75" y="38.75" width="7.80" height="7.80" fill="#3a3a3a"/><rect x="23.25" y="38.75" width="7.80" height="7.80" fill="#3a3a3a"/><rect x="38.75" y="38.75" width="7.80" height="7.80" fill="#3a3a3a"/><rect x="54.25" y="38.75" width="7.80" height="7.80" fill="#3a3a3a"/><rect x="0.00" y="46.50" width="7.80" height="7.80" fill="#3a3a3a"/><rect x="15.50" y="46.50" width="7.80" height="7.80" fill="#b4b4b4"/><rect x="31.00" y="46.50" width="7.80" height="7.80" fill="#3a3a3a"/><rect x="46.50" y="46.50" width="7.80" height="7.80" fill="#b4b4b4"/><rect x="7.75" y="54.25" width="7.80" height="7.80" fill="#3a3a3a"/><rect x="23.25" y="54.25" width="7.80" height="7.80" fill="#3a3a3a"/><rect x="38.75" y="54.25" width="7.80" height="7.80" fill="#3a3a3a"/><rect x="54.25" y="54.25" width="7.80" height="7.80" fill="#3a3a3a"/></svg>
<div class="a" style="left:340.0px;top:870px;width:62px;height:2px;background:#1f9a3a"></div>
<div class="t" style="left:340.0px;top:885px;width:62px;text-align:center">001</div>
<div class="a" style="left:409.6px;top:810px;width:62px;height:100px;background:#2d2d30"></div>
<svg style="left:409.6px;top:810px" width="62" height="61" viewBox="0 0 62 61"><rect width="62" height="61" fill="#e2e2e2"/><rect x="0.00" y="0.00" width="7.80" height="7.80" fill="#16932c"/><rect x="15.50" y="0.00" width="7.80" height="7.80" fill="#9ac512"/><rect x="31.00" y="0.00" width="7.80" height="7.80" fill="#16932c"/><rect x="46.50" y="0.00" width="7.80" height="7.80" fill="#9ac512"/><rect x="7.75" y="7.75" width="7.80" height="7.80" fill="#16932c"/><rect x="23.25" y="7.75" width="7.80" height="7.80" fill="#16932c"/><rect x="38.75" y="7.75" width="7.80" height="7.80" fill="#16932c"/><rect x="54.25" y="7.75" width="7.80" height="7.80" fill="#16932c"/><rect x="0.00" y="15.50" width="7.80" height="7.80" fill="#16932c"/><rect x="15.50" y="15.50" width="7.80" height="7.80" fill="#9ac512"/><rect x="31.00" y="15.50" width="7.80" height="7.80" fill="#16932c"/><rect x="46.50" y="15.50" width="7.80" height="7.80" fill="#9ac512"/><rect x="7.75" y="23.25" width="7.80" height="7.80" fill="#16932c"/><rect x="23.25" y="23.25" width="7.80" height="7.80" fill="#16932c"/><rect x="38.75" y="23.25" width="7.80" height="7.80" fill="#16932c"/><rect x="54.25" y="23.25" width="7.80" height="7.80" fill="#16932c"/><rect x="0.00" y="31.00" width="7.80" height="7.80" fill="#16932c"/><rect x="15.50" y="31.00" width="7.80" height="7.80" fill="#9ac512"/><rect x="31.00" y="31.00" width="7.80" height="7.80" fill="#16932c"/><rect x="46.50" y="31.00" width="7.80" height="7.80" fill="#9ac512"/><rect x="7.75" y="38.75" width="7.80" height="7.80" fill="#16932c"/><rect x="23.25" y="38.75" width="7.80" height="7.80" fill="#16932c"/><rect x="38.75" y="38.75" width="7.80" height="7.80" fill="#16932c"/><rect x="54.25" y="38.75" width="7.80" height="7.80" fill="#16932c"/><rect x="0.00" y="46.50" width="7.80" height="7.80" fill="#16932c"/><rect x="15.50" y="46.50" width="7.80" height="7.80" fill="#9ac512"/><rect x="31.00" y="46.50" width="7.80" height="7.80" fill="#16932c"/><rect x="46.50" y="46.50" width="7.80" height="7.80" fill="#9ac512"/><rect x="7.75" y="54.25" width="7.80" height="7.80" fill="#16932c"/><rect x="23.25" y="54.25" width="7.80" height="7.80" fill="#16932c"/><rect x="38.75" y="54.25" width="7.80" height="7.80" fill="#16932c"/><rect x="54.25" y="54.25" width="7.80" height="7.80" fill="#16932c"/></svg>
<div class="a" style="left:409.6px;top:870px;width:62px;height:2px;background:#1f9a3a"></div>
<div class="t" style="left:409.6px;top:885px;width:62px;text-align:center">002</div>
<div class="a" style="left:479.3px;top:810px;width:62px;height:100px;background:#2d2d30"></div>
<svg style="left:479.3px;top:810px" width="62" height="61" viewBox="0 0 62 61"><rect width="62" height="61" fill="#eedd3c"/><rect x="0.00" y="0.00" width="7.80" height="7.80" fill="#2a33b2"/><rect x="15.50" y="0.00" width="7.80" height="7.80" fill="#6c92cf"/><rect x="31.00" y="0.00" width="7.80" height="7.80" fill="#2a33b2"/><rect x="46.50" y="0.00" width="7.80" height="7.80" fill="#6c92cf"/><rect x="7.75" y="7.75" width="7.80" height="7.80" fill="#2a33b2"/><rect x="23.25" y="7.75" width="7.80" height="7.80" fill="#2a33b2"/><rect x="38.75" y="7.75" width="7.80" height="7.80" fill="#2a33b2"/><rect x="54.25" y="7.75" width="7.80" height="7.80" fill="#2a33b2"/><rect x="0.00" y="15.50" width="7.80" height="7.80" fill="#2a33b2"/><rect x="15.50" y="15.50" width="7.80" height="7.80" fill="#6c92cf"/><rect x="31.00" y="15.50" width="7.80" height="7.80" fill="#2a33b2"/><rect x="46.50" y="15.50" width="7.80" height="7.80" fill="#6c92cf"/><rect x="7.75" y="23.25" width="7.80" height="7.80" fill="#2a33b2"/><rect x="23.25" y="23.25" width="7.80" height="7.80" fill="#2a33b2"/><rect x="38.75" y="23.25" width="7.80" height="7.80" fill="#2a33b2"/><rect x="54.25" y="23.25" width="7.80" height="7.80" fill="#2a33b2"/><rect x="0.00" y="31.00" width="7.80" height="7.80" fill="#2a33b2"/><rect x="15.50" y="31.00" width="7.80" height="7.80" fill="#6c92cf"/><rect x="31.00" y="31.00" width="7.80" height="7.80" fill="#2a33b2"/><rect x="46.50" y="31.00" width="7.80" height="7.80" fill="#6c92cf"/><rect x="7.75" y="38.75" width="7.80" height="7.80" fill="#2a33b2"/><rect x="23.25" y="38.75" width="7.80" height="7.80" fill="#2a33b2"/><rect x="38.75" y="38.75" width="7.80" height="7.80" fill="#2a33b2"/><rect x="54.25" y="38.75" width="7.80" height="7.80" fill="#2a33b2"/><rect x="0.00" y="46.50" width="7.80" height="7.80" fill="#2a33b2"/><rect x="15.50" y="46.50" width="7.80" height="7.80" fill="#6c92cf"/><rect x="31.00" y="46.50" width="7.80" height="7.80" fill="#2a33b2"/><rect x="46.50" y="46.50" width="7.80" height="7.80" fill="#6c92cf"/><rect x="7.75" y="54.25" width="7.80" height="7.80" fill="#2a33b2"/><rect x="23.25" y="54.25" width="7.80" height="7.80" fill="#2a33b2"/><rect x="38.75" y="54.25" width="7.80" height="7.80" fill="#2a33b2"/><rect x="54.25" y="54.25" width="7.80" height="7.80" fill="#2a33b2"/></svg>
<div class="a" style="left:479.3px;top:870px;width:62px;height:2px;background:#1f9a3a"></div>
<div class="t" style="left:479.3px;top:885px;width:62px;text-align:center">003</div>
<div class="a" style="left:549.0px;top:810px;width:62px;height:100px;background:#2d2d30"></div>
<svg style="left:549.0px;top:810px" width="62" height="61" viewBox="0 0 62 61"><rect width="62" height="61" fill="#c4f51a"/><rect x="0.00" y="0.00" width="7.80" height="7.80" fill="#6e2f86"/><rect x="15.50" y="0.00" width="7.80" height="7.80" fill="#c4b8e6"/><rect x="31.00" y="0.00" width="7.80" height="7.80" fill="#6e2f86"/><rect x="46.50" y="0.00" width="7.80" height="7.80" fill="#c4b8e6"/><rect x="7.75" y="7.75" width="7.80" height="7.80" fill="#6e2f86"/><rect x="23.25" y="7.75" width="7.80" height="7.80" fill="#6e2f86"/><rect x="38.75" y="7.75" width="7.80" height="7.80" fill="#6e2f86"/><rect x="54.25" y="7.75" width="7.80" height="7.80" fill="#6e2f86"/><rect x="0.00" y="15.50" width="7.80" height="7.80" fill="#6e2f86"/><rect x="15.50" y="15.50" width="7.80" height="7.80" fill="#c4b8e6"/><rect x="31.00" y="15.50" width="7.80" height="7.80" fill="#6e2f86"/><rect x="46.50" y="15.50" width="7.80" height="7.80" fill="#c4b8e6"/><rect x="7.75" y="23.25" width="7.80" height="7.80" fill="#6e2f86"/><rect x="23.25" y="23.25" width="7.80" height="7.80" fill="#6e2f86"/><rect x="38.75" y="23.25" width="7.80" height="7.80" fill="#6e2f86"/><rect x="54.25" y="23.25" width="7.80" height="7.80" fill="#6e2f86"/><rect x="0.00" y="31.00" width="7.80" height="7.80" fill="#6e2f86"/><rect x="15.50" y="31.00" width="7.80" height="7.80" fill="#c4b8e6"/><rect x="31.00" y="31.00" width="7.80" height="7.80" fill="#6e2f86"/><rect x="46.50" y="31.00" width="7.80" height="7.80" fill="#c4b8e6"/><rect x="7.75" y="38.75" width="7.80" height="7.80" fill="#6e2f86"/><rect x="23.25" y="38.75" width="7.80" height="7.80" fill="#6e2f86"/><rect x="38.75" y="38.75" width="7.80" height="7.80" fill="#6e2f86"/><rect x="54.25" y="38.75" width="7.80" height="7.80" fill="#6e2f86"/><rect x="0.00" y="46.50" width="7.80" height="7.80" fill="#6e2f86"/><rect x="15.50" y="46.50" width="7.80" height="7.80" fill="#c4b8e6"/><rect x="31.00" y="46.50" width="7.80" height="7.80" fill="#6e2f86"/><rect x="46.50" y="46.50" width="7.80" height="7.80" fill="#c4b8e6"/><rect x="7.75" y="54.25" width="7.80" height="7.80" fill="#6e2f86"/><rect x="23.25" y="54.25" width="7.80" height="7.80" fill="#6e2f86"/><rect x="38.75" y="54.25" width="7.80" height="7.80" fill="#6e2f86"/><rect x="54.25" y="54.25" width="7.80" height="7.80" fill="#6e2f86"/></svg>
<div class="a" style="left:549.0px;top:870px;width:62px;height:2px;background:#1f9a3a"></div>
<div class="t" style="left:549.0px;top:885px;width:62px;text-align:center">004</div>
<div class="a" style="left:618.6px;top:810px;width:62px;height:100px;background:#2d2d30"></div>
<svg style="left:618.6px;top:810px" width="62" height="61" viewBox="0 0 62 61"><rect width="62" height="61" fill="#8a8a8a"/><rect x="0.00" y="0.00" width="7.80" height="7.80" fill="#f2e850"/><rect x="15.50" y="0.00" width="7.80" height="7.80" fill="#e42222"/><rect x="31.00" y="0.00" width="7.80" height="7.80" fill="#f2e850"/><rect x="46.50" y="0.00" width="7.80" height="7.80" fill="#e42222"/><rect x="7.75" y="7.75" width="7.80" height="7.80" fill="#e42222"/><rect x="23.25" y="7.75" width="7.80" height="7.80" fill="#e42222"/><rect x="38.75" y="7.75" width="7.80" height="7.80" fill="#e42222"/><rect x="54.25" y="7.75" width="7.80" height="7.80" fill="#e42222"/><rect x="0.00" y="15.50" width="7.80" height="7.80" fill="#e42222"/><rect x="15.50" y="15.50" width="7.80" height="7.80" fill="#f2e850"/><rect x="31.00" y="15.50" width="7.80" height="7.80" fill="#e42222"/><rect x="46.50" y="15.50" width="7.80" height="7.80" fill="#f2e850"/><rect x="7.75" y="23.25" width="7.80" height="7.80" fill="#e42222"/><rect x="23.25" y="23.25" width="7.80" height="7.80" fill="#e42222"/><rect x="38.75" y="23.25" width="7.80" height="7.80" fill="#e42222"/><rect x="54.25" y="23.25" width="7.80" height="7.80" fill="#e42222"/><rect x="0.00" y="31.00" width="7.80" height="7.80" fill="#f2e850"/><rect x="15.50" y="31.00" width="7.80" height="7.80" fill="#e42222"/><rect x="31.00" y="31.00" width="7.80" height="7.80" fill="#f2e850"/><rect x="46.50" y="31.00" width="7.80" height="7.80" fill="#e42222"/><rect x="7.75" y="38.75" width="7.80" height="7.80" fill="#e42222"/><rect x="23.25" y="38.75" width="7.80" height="7.80" fill="#e42222"/><rect x="38.75" y="38.75" width="7.80" height="7.80" fill="#e42222"/><rect x="54.25" y="38.75" width="7.80" height="7.80" fill="#e42222"/><rect x="0.00" y="46.50" width="7.80" height="7.80" fill="#e42222"/><rect x="15.50" y="46.50" width="7.80" height="7.80" fill="#f2e850"/><rect x="31.00" y="46.50" width="7.80" height="7.80" fill="#e42222"/><rect x="46.50" y="46.50" width="7.80" height="7.80" fill="#f2e850"/><rect x="7.75" y="54.25" width="7.80" height="7.80" fill="#e42222"/><rect x="23.25" y="54.25" width="7.80" height="7.80" fill="#e42222"/><rect x="38.75" y="54.25" width="7.80" height="7.80" fill="#e42222"/><rect x="54.25" y="54.25" width="7.80" height="7.80" fill="#e42222"/></svg>
<div class="a" style="left:618.6px;top:870px;width:62px;height:2px;background:#1f9a3a"></div>
<div class="t" style="left:618.6px;top:885px;width:62px;text-align:center">005</div>
<div class="a" style="left:688.2px;top:810px;width:62px;height:100px;background:#2d2d30"></div>
<svg style="left:688.2px;top:810px" width="62" height="61" viewBox="0 0 62 61"><rect width="62" height="61" fill="#7a9ad6"/><rect x="0.00" y="0.00" width="7.80" height="7.80" fill="#c8c0f0"/><rect x="15.50" y="0.00" width="7.80" height="7.80" fill="#000000"/><rect x="31.00" y="0.00" width="7.80" height="7.80" fill="#c8c0f0"/><rect x="46.50" y="0.00" width="7.80" height="7.80" fill="#000000"/><rect x="7.75" y="7.75" width="7.80" height="7.80" fill="#000000"/><rect x="23.25" y="7.75" width="7.80" height="7.80" fill="#000000"/><rect x="38.75" y="7.75" width="7.80" height="7.80" fill="#000000"/><rect x="54.25" y="7.75" width="7.80" height="7.80" fill="#000000"/><rect x="0.00" y="15.50" width="7.80" height="7.80" fill="#000000"/><rect x="15.50" y="15.50" width="7.80" height="7.80" fill="#c8c0f0"/><rect x="31.00" y="15.50" width="7.80" height="7.80" fill="#000000"/><rect x="46.50" y="15.50" width="7.80" height="7.80" fill="#c8c0f0"/><rect x="7.75" y="23.25" width="7.80" height="7.80" fill="#000000"/><rect x="23.25" y="23.25" width="7.80" height="7.80" fill="#000000"/><rect x="38.75" y="23.25" width="7.80" height="7.80" fill="#000000"/><rect x="54.25" y="23.25" width="7.80" height="7.80" fill="#000000"/><rect x="0.00" y="31.00" width="7.80" height="7.80" fill="#c8c0f0"/><rect x="15.50" y="31.00" width="7.80" height="7.80" fill="#000000"/><rect x="31.00" y="31.00" width="7.80" height="7.80" fill="#c8c0f0"/><rect x="46.50" y="31.00" width="7.80" height="7.80" fill="#000000"/><rect x="7.75" y="38.75" width="7.80" height="7.80" fill="#000000"/><rect x="23.25" y="38.75" width="7.80" height="7.80" fill="#000000"/><rect x="38.75" y="38.75" width="7.80" height="7.80" fill="#000000"/><rect x="54.25" y="38.75" width="7.80" height="7.80" fill="#000000"/><rect x="0.00" y="46.50" width="7.80" height="7.80" fill="#000000"/><rect x="15.50" y="46.50" width="7.80" height="7.80" fill="#c8c0f0"/><rect x="31.00" y="46.50" width="7.80" height="7.80" fill="#000000"/><rect x="46.50" y="46.50" width="7.80" height="7.80" fill="#c8c0f0"/><rect x="7.75" y="54.25" width="7.80" height="7.80" fill="#000000"/><rect x="23.25" y="54.25" width="7.80" height="7.80" fill="#000000"/><rect x="38.75" y="54.25" width="7.80" height="7.80" fill="#000000"/><rect x="54.25" y="54.25" width="7.80" height="7.80" fill="#000000"/></svg>
<div class="a" style="left:688.2px;top:870px;width:62px;height:2px;background:#1f9a3a"></div>
<div class="t" style="left:688.2px;top:885px;width:62px;text-align:center">006</div>
<div class="a" style="left:757.9px;top:810px;width:62px;height:100px;background:#2d2d30"></div>
<svg style="left:757.9px;top:810px" width="62" height="61" viewBox="0 0 62 61"><rect width="62" height="61" fill="#b8f024"/><rect x="0.00" y="0.00" width="7.80" height="7.80" fill="#f4a2c8"/><rect x="15.50" y="0.00" width="7.80" height="7.80" fill="#c4c4cc"/><rect x="31.00" y="0.00" width="7.80" height="7.80" fill="#f4a2c8"/><rect x="46.50" y="0.00" width="7.80" height="7.80" fill="#c4c4cc"/><rect x="7.75" y="7.75" width="7.80" height="7.80" fill="#c4c4cc"/><rect x="23.25" y="7.75" width="7.80" height="7.80" fill="#c4c4cc"/><rect x="38.75" y="7.75" width="7.80" height="7.80" fill="#c4c4cc"/><rect x="54.25" y="7.75" width="7.80" height="7.80" fill="#c4c4cc"/><rect x="0.00" y="15.50" width="7.80" height="7.80" fill="#c4c4cc"/><rect x="15.50" y="15.50" width="7.80" height="7.80" fill="#f4a2c8"/><rect x="31.00" y="15.50" width="7.80" height="7.80" fill="#c4c4cc"/><rect x="46.50" y="15.50" width="7.80" height="7.80" fill="#f4a2c8"/><rect x="7.75" y="23.25" width="7.80" height="7.80" fill="#c4c4cc"/><rect x="23.25" y="23.25" width="7.80" height="7.80" fill="#c4c4cc"/><rect x="38.75" y="23.25" width="7.80" height="7.80" fill="#c4c4cc"/><rect x="54.25" y="23.25" width="7.80" height="7.80" fill="#c4c4cc"/><rect x="0.00" y="31.00" width="7.80" height="7.80" fill="#f4a2c8"/><rect x="15.50" y="31.00" width="7.80" height="7.80" fill="#c4c4cc"/><rect x="31.00" y="31.00" width="7.80" height="7.80" fill="#f4a2c8"/><rect x="46.50" y="31.00" width="7.80" height="7.80" fill="#c4c4cc"/><rect x="7.75" y="38.75" width="7.80" height="7.80" fill="#c4c4cc"/><rect x="23.25" y="38.75" width="7.80" height="7.80" fill="#c4c4cc"/><rect x="38.75" y="38.75" width="7.80" height="7.80" fill="#c4c4cc"/><rect x="54.25" y="38.75" width="7.80" height="7.80" fill="#c4c4cc"/><rect x="0.00" y="46.50" width="7.80" height="7.80" fill="#c4c4cc"/><rect x="15.50" y="46.50" width="7.80" height="7.80" fill="#f4a2c8"/><rect x="31.00" y="46.50" width="7.80" height="7.80" fill="#c4c4cc"/><rect x="46.50" y="46.50" width="7.80" height="7.80" fill="#f4a2c8"/><rect x="7.75" y="54.25" width="7.80" height="7.80" fill="#c4c4cc"/><rect x="23.25" y="54.25" width="7.80" height="7.80" fill="#c4c4cc"/><rect x="38.75" y="54.25" width="7.80" height="7.80" fill="#c4c4cc"/><rect x="54.25" y="54.25" width="7.80" height="7.80" fill="#c4c4cc"/></svg>
<div class="a" style="left:757.9px;top:870px;width:62px;height:2px;background:#1f9a3a"></div>
<div class="t" style="left:757.9px;top:885px;width:62px;text-align:center">007</div>
<div class="a" style="left:827.6px;top:810px;width:62px;height:100px;background:#2d2d30"></div>
<svg style="left:827.6px;top:810px" width="62" height="62" viewBox="0 0 62 62"><defs><radialGradient id="sph" cx="0.42" cy="0.35" r="0.65"><stop offset="0" stop-color="#8cb89c"/><stop offset="0.7" stop-color="#6e9c84"/><stop offset="1" stop-color="#5e8474"/></radialGradient></defs><rect width="62" height="62" fill="#5b7272"/><circle cx="30" cy="31" r="26" fill="url(#sph)"/><rect y="59" width="62" height="3" fill="#2f8a7a"/></svg>
<div class="t" style="left:827.6px;top:885px;width:62px;overflow:hidden;text-align:left;padding-left:0px">statue_004_m</div>

<!-- ===== status bar ===== -->
<div class="a" style="left:0;top:1024px;width:1920px;height:21px;background:#007acc"></div>
<div class="t" style="left:4px;top:1028px;color:#f4f8ff">Ready</div>
<!-- ===== taskbar ===== -->
<div class="a" style="left:0;top:1045px;width:1920px;height:35px;background:#1c1c1c"></div>
<svg style="left:636px;top:1053px" width="18" height="18" viewBox="0 0 18 18"><defs><linearGradient id="wl" x1="0" y1="0" x2="1" y2="1"><stop offset="0" stop-color="#4fd2ff"/><stop offset="1" stop-color="#0a84e0"/></linearGradient></defs><rect x="0" y="0" width="8.5" height="8.5" fill="url(#wl)"/><rect x="9.5" y="0" width="8.5" height="8.5" fill="url(#wl)"/><rect x="0" y="9.5" width="8.5" height="8.5" fill="url(#wl)"/><rect x="9.5" y="9.5" width="8.5" height="8.5" fill="url(#wl)"/></svg>
<div class="a" style="left:664px;top:1050px;width:164px;height:24px;border-radius:12px;background:#373737;border:1px solid #444"></div>
<svg style="left:672px;top:1055px" width="14" height="14" viewBox="0 0 14 14"><circle cx="6" cy="6" r="4.5" fill="none" stroke="#e8e8e8" stroke-width="1.4"/><path d="M9.3 9.3 L13 13" stroke="#e8e8e8" stroke-width="1.5"/></svg>
<div class="t" style="left:691px;top:1056px;color:#e0e0e0;font-size:11px">Search</div>
<!-- task icons -->
<svg style="left:837px;top:1053px" width="19" height="18" viewBox="0 0 19 18"><rect x="0" y="5" width="13" height="12" fill="#7a7a7a"/><rect x="5" y="0" width="13" height="12" fill="#e4e4e4"/></svg>
<svg style="left:869px;top:1052px" width="20" height="20" viewBox="0 0 20 20"><defs><linearGradient id="edg" x1="0" y1="0" x2="1" y2="1"><stop offset="0" stop-color="#35c1f1"/><stop offset="0.6" stop-color="#1a7fd0"/><stop offset="1" stop-color="#54e07a"/></linearGradient></defs><circle cx="10" cy="10" r="9.5" fill="url(#edg)"/><circle cx="11" cy="11.5" r="4" fill="#1c1c1c"/></svg>
<div class="a" style="left:877px;top:1075px;width:5px;height:3px;border-radius:2px;background:#9a9a9a"></div>
<svg style="left:903px;top:1053px" width="19" height="17" viewBox="0 0 19 17"><path d="M0 1 H7 L9 3 H19 V17 H0 Z" fill="#f5c242"/><rect x="0" y="6" width="19" height="11" fill="#ffd75e"/><rect x="5" y="11" width="9" height="6" fill="#2e86d8"/></svg>
<svg style="left:936px;top:1053px" width="19" height="19" viewBox="0 0 19 19"><circle cx="9.5" cy="9.5" r="9" fill="#3aa0d8"/><circle cx="6" cy="6" r="2" fill="#f44"/><circle cx="11" cy="4.5" r="1.8" fill="#ff0"/><circle cx="14" cy="8" r="1.8" fill="#4c4"/><circle cx="8" cy="14" r="2.5" fill="#1c1c1c"/></svg>
<svg style="left:969px;top:1053px" width="18" height="18" viewBox="0 0 18 18"><rect x="0" y="2" width="18" height="16" rx="1.5" fill="#1e90ff"/><rect x="0" y="2" width="18" height="4" fill="#0d6fd0"/><g fill="#cfe6ff"><rect x="3" y="8" width="2.5" height="2.5"/><rect x="7.5" y="8" width="2.5" height="2.5"/><rect x="12" y="8" width="2.5" height="2.5"/><rect x="3" y="12.5" width="2.5" height="2.5"/><rect x="7.5" y="12.5" width="2.5" height="2.5"/><rect x="12" y="12.5" width="2.5" height="2.5"/></g></svg>
<svg style="left:1004px;top:1052px" width="13" height="20" viewBox="0 0 13 20"><rect x="2" y="0" width="9" height="14" rx="2" fill="#8a8a8a"/><rect x="3.5" y="5" width="6" height="6" fill="#d24a3a"/><rect x="5.5" y="14" width="2" height="4" fill="#8a8a8a"/><rect x="2" y="18" width="9" height="1.5" fill="#8a8a8a"/></svg>
<svg style="left:1036px;top:1052px" width="16" height="20" viewBox="0 0 16 20"><rect x="0" y="0" width="16" height="20" rx="2" fill="#6b7a88"/><rect x="2" y="2" width="12" height="4" fill="#9fd0ff"/><g fill="#cfe0ee"><rect x="2" y="8" width="3" height="3"/><rect x="6.5" y="8" width="3" height="3"/><rect x="11" y="8" width="3" height="3"/><rect x="2" y="12.5" width="3" height="3"/><rect x="6.5" y="12.5" width="3" height="3"/></g><rect x="11" y="12.5" width="3" height="6" fill="#3a8ee6"/></svg>
<svg style="left:1067px;top:1052px" width="20" height="20" viewBox="0 0 20 20"><circle cx="10" cy="10" r="9.3" fill="#2a2a2a" stroke="#d8d8d8" stroke-width="1.2"/><circle cx="10" cy="5.5" r="3" fill="none" stroke="#d8d8d8" stroke-width="1.3"/><circle cx="6" cy="12.5" r="3" fill="none" stroke="#d8d8d8" stroke-width="1.3"/><circle cx="14" cy="12.5" r="3" fill="none" stroke="#d8d8d8" stroke-width="1.3"/></svg>
<svg style="left:1100px;top:1053px" width="20" height="18" viewBox="0 0 20 18"><rect x="0" y="0" width="20" height="13" fill="#f0f0f0"/><rect x="8" y="13" width="4" height="3" fill="#888"/><rect x="4" y="16" width="12" height="2" fill="#888"/><text x="10" y="10" font-size="8" text-anchor="middle" fill="#333" font-family="Liberation Sans">SVG</text></svg>
<svg style="left:1135px;top:1052px" width="16" height="20" viewBox="0 0 16 20"><defs><linearGradient id="drp" x1="0" y1="0" x2="1" y2="1"><stop offset="0" stop-color="#ff6ad5"/><stop offset="0.5" stop-color="#c44cf0"/><stop offset="1" stop-color="#3a7cf0"/></linearGradient></defs><path d="M8 0 Q16 10 15 13 A7 7 0 0 1 1 13 Q0 10 8 0 Z" fill="url(#drp)"/></svg>
<svg style="left:1167px;top:1052px" width="18" height="20" viewBox="0 0 18 20"><path d="M9 0 L16 17 H2 Z" fill="#ff8800"/><rect x="4" y="7" width="10" height="2" fill="#fff"/><rect x="3" y="12" width="12" height="2" fill="#fff"/><rect x="0" y="17" width="18" height="3" fill="#ff8800"/></svg>
<svg style="left:1199px;top:1054px" width="20" height="16" viewBox="0 0 20 16"><rect x="0" y="3" width="20" height="13" rx="2" fill="#7e8c9a"/><rect x="6" y="0" width="8" height="4" fill="#7e8c9a"/><circle cx="10" cy="9.5" r="4.2" fill="#d0e4ff"/><circle cx="10" cy="9.5" r="2.6" fill="#5a6bd8"/></svg>
<svg style="left:1232px;top:1052px" width="20" height="20" viewBox="0 0 20 20"><circle cx="10" cy="10" r="9.5" fill="#1c8ad6"/><path d="M5 7 L15 4.5 L10.5 9.5 L14 10 L7.5 15.5 L8.5 10.5 Z" fill="#1c1c1c"/></svg>
<div class="a" style="left:1240px;top:1075px;width:5px;height:3px;border-radius:2px;background:#9a9a9a"></div>
<div class="a" style="left:1258px;top:1047px;width:34px;height:31px;border-radius:4px;background:#2a2a2a"></div>
<svg style="left:1265px;top:1052px" width="20" height="20" viewBox="0 0 20 20"><circle cx="10" cy="10" r="9.5" fill="#1c8ad6"/><path d="M5 7 L15 4.5 L10.5 9.5 L14 10 L7.5 15.5 L8.5 10.5 Z" fill="#1c1c1c"/></svg>
<div class="a" style="left:1267px;top:1075px;width:16px;height:3px;border-radius:2px;background:#4cc2ff"></div>
<!-- tray -->
<svg style="left:1676px;top:1058px" width="10" height="6" viewBox="0 0 10 6"><path d="M0.8 5.2 L5 1 L9.2 5.2" fill="none" stroke="#e0e0e0" stroke-width="1.3"/></svg>
<svg style="left:1698px;top:1056px" width="15" height="10" viewBox="0 0 15 10"><path d="M3 10 A3 3 0 0 1 3 4 A4.5 4.5 0 0 1 11.5 3.5 A3.2 3.2 0 0 1 12 10 Z" fill="#d8d8d8"/></svg>
<svg style="left:1722px;top:1056px" width="14" height="10" viewBox="0 0 14 10"><rect x="0.6" y="0.6" width="12.8" height="8.8" rx="1" fill="none" stroke="#d8d8d8" stroke-width="1.1"/><path d="M3 3.5 H11 M3 6.5 H11" stroke="#d8d8d8" stroke-width="1"/></svg>
<div class="t" style="left:1748px;top:1056px;color:#e8e8e8;font-size:10px">DAN</div>
<svg style="left:1779px;top:1054px" width="14" height="14" viewBox="0 0 14 14"><rect x="0.6" y="1.6" width="11" height="8.5" fill="none" stroke="#d8d8d8" stroke-width="1.1"/><path d="M4 13 H8 M6 10 V13" stroke="#d8d8d8" stroke-width="1.1"/></svg>
<svg style="left:1797px;top:1055px" width="13" height="12" viewBox="0 0 13 12"><path d="M0.6 4 H3 L6.5 1 V11 L3 8 H0.6 Z" fill="none" stroke="#d8d8d8" stroke-width="1.1"/><path d="M8.5 4 Q10 6 8.5 8 M10.5 2.5 Q13 6 10.5 9.5" fill="none" stroke="#d8d8d8" stroke-width="1"/></svg>
<svg style="left:1815px;top:1056px" width="16" height="10" viewBox="0 0 16 10"><rect x="0.6" y="1" width="13" height="8" rx="1" fill="#d8d8d8"/><rect x="14" y="3.5" width="1.6" height="3" fill="#d8d8d8"/></svg>
<div class="t" style="left:1854px;top:1050px;color:#e8e8e8;font-size:9.5px">3:52 AM</div>
<div class="t" style="left:1841px;top:1062px;color:#e8e8e8;font-size:9.5px">10/31/2025</div>
<svg style="left:1893px;top:1054px" width="13" height="14" viewBox="0 0 13 14"><path d="M2 10 V6 A4.5 4.5 0 0 1 11 6 V10 L12.4 11.5 H0.6 Z" fill="none" stroke="#d8d8d8" stroke-width="1.1"/></svg>

</body></html>
